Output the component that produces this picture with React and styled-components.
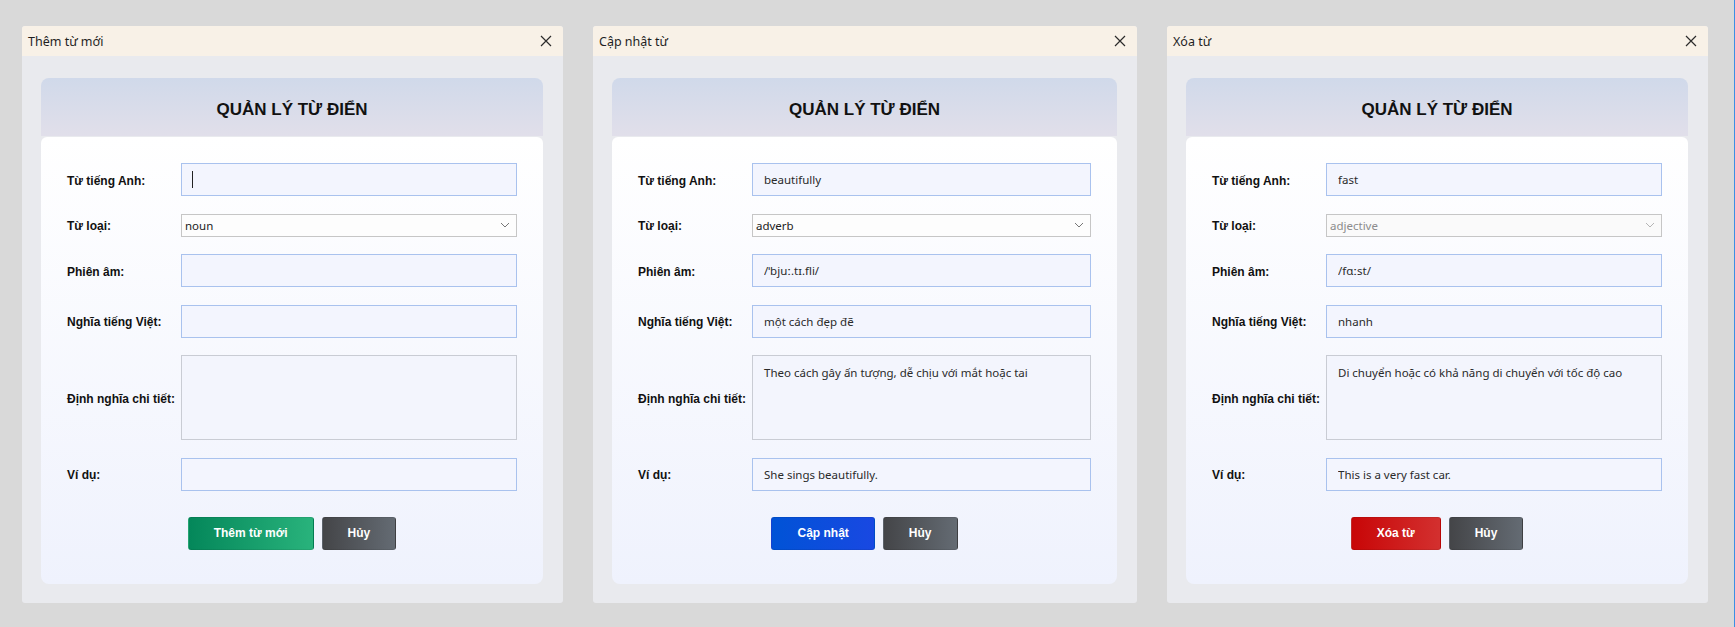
import React from "react";
import styled, { createGlobalStyle } from "styled-components";

const S = {};

const GlobalStyle = createGlobalStyle`
    html, body {
        margin: 0;
        padding: 0;
        background: #d9d9d9;
    }
    * {
        box-sizing: border-box;
    }
`;

const LABEL_FONT = `"Liberation Sans", Arial, sans-serif`;
const UI_FONT = `"Noto Sans", "Open Sans", sans-serif`;

const buttonColors = {
    green: "linear-gradient(90deg, #04875a 0%, #29b37c 100%)",
    blue: "linear-gradient(90deg, #0053d6 0%, #1948e2 100%)",
    red: "linear-gradient(90deg, #c80607 0%, #d3302f 100%)",
    gray: "linear-gradient(90deg, #444548 0%, #646b73 100%)",
};

const dialogs = [
    {
        title: "Thêm từ mới",
        width: 541,
        action: "Thêm từ mới",
        color: "green",
        focused: true,
        values: { word: "", type: "noun", phonetic: "", meaning: "", definition: "", example: "" },
    },
    {
        title: "Cập nhật từ",
        width: 544,
        action: "Cập nhật",
        color: "blue",
        values: {
            word: "beautifully",
            type: "adverb",
            phonetic: "/ˈbjuː.tɪ.fli/",
            meaning: "một cách đẹp đẽ",
            definition: "Theo cách gây ấn tượng, dễ chịu với mắt hoặc tai",
            example: "She sings beautifully.",
        },
    },
    {
        title: "Xóa từ",
        width: 541,
        action: "Xóa từ",
        color: "red",
        lockType: true,
        values: {
            word: "fast",
            type: "adjective",
            phonetic: "/fɑːst/",
            meaning: "nhanh",
            definition: "Di chuyển hoặc có khả năng di chuyển với tốc độ cao",
            example: "This is a very fast car.",
        },
    },
];

const CloseIcon = () => (
    <svg width="12" height="12" viewBox="0 0 12 12">
        <path d="M1 1 L11 11 M11 1 L1 11" stroke="#2b2b2b" strokeWidth="1.2" />
    </svg>
);

const Chevron = ({ light }) => (
    <svg width="10" height="6" viewBox="0 0 10 6">
        <path d="M1 1 L5 5 L9 1" fill="none" stroke={light ? "#b5b5b5" : "#777"} strokeWidth="1" />
    </svg>
);

const Dialog = ({ title, width, action, color, values, focused, lockType }) => (
    <S.Window $width={width}>
        <S.TitleBar>
            <span>{title}</span>
            <CloseIcon />
        </S.TitleBar>
        <S.Content>
            <S.Header>QUẢN LÝ TỪ ĐIỂN</S.Header>
            <S.Card>
                <S.Form>
                    <S.Label>Từ tiếng Anh:</S.Label>
                    <S.Field>
                        <S.Input readOnly value={values.word} />
                        {focused && <S.Caret />}
                    </S.Field>

                    <S.Label>Từ loại:</S.Label>
                    <S.Field>
                        <S.Select value={values.type} disabled={lockType} onChange={() => {}}>
                            <option value="noun">noun</option>
                            <option value="verb">verb</option>
                            <option value="adjective">adjective</option>
                            <option value="adverb">adverb</option>
                        </S.Select>
                        <S.Arrow>
                            <Chevron light={lockType} />
                        </S.Arrow>
                    </S.Field>

                    <S.Label>Phiên âm:</S.Label>
                    <S.Input readOnly value={values.phonetic} />

                    <S.Label>Nghĩa tiếng Việt:</S.Label>
                    <S.Input readOnly value={values.meaning} />

                    <S.Label>Định nghĩa chi tiết:</S.Label>
                    <S.TextArea readOnly value={values.definition} />

                    <S.Label>Ví dụ:</S.Label>
                    <S.Input readOnly value={values.example} />
                </S.Form>
                <S.Actions>
                    <S.Button $color={color}>{action}</S.Button>
                    <S.Button $color="gray">Hủy</S.Button>
                </S.Actions>
            </S.Card>
        </S.Content>
    </S.Window>
);

const App = () => (
    <>
        <GlobalStyle />
        <S.Page>
            {dialogs.map((d) => (
                <Dialog key={d.title} {...d} />
            ))}
        </S.Page>
    </>
);

S.Page = styled.div`
    display: flex;
    align-items: flex-start;
    gap: 30px;
    width: 1735px;
    min-height: 100vh;
    padding: 26px 0 0 22px;
    border-right: 1px solid #3b8fe4;
`;

S.Window = styled.div`
    width: ${(p) => p.$width}px;
    flex-shrink: 0;
    background: #e9eaee;
    border-radius: 3px;
    overflow: hidden;
`;

S.TitleBar = styled.div`
    display: flex;
    align-items: center;
    justify-content: space-between;
    height: 30px;
    padding: 0 11px 0 6px;
    background: #f8f1e7;
    font-family: ${UI_FONT};
    font-size: 12.5px;
    color: #1f1f1f;
`;

S.Content = styled.div`
    padding: 22px 20px 19px 19px;
`;

S.Header = styled.div`
    display: flex;
    align-items: center;
    justify-content: center;
    height: 58px;
    padding-top: 6px;
    border-radius: 8px 8px 0 0;
    background: linear-gradient(180deg, #d0d9ea 0%, #e1dfea 100%);
    font-family: ${LABEL_FONT};
    font-weight: bold;
    font-size: 17px;
    color: #111;
`;

S.Card = styled.div`
    margin-top: 1px;
    padding: 26px 26px 34px 26px;
    border-radius: 6px 6px 8px 8px;
    background: linear-gradient(180deg, #ffffff 0%, #eff2fd 100%);
`;

S.Form = styled.div`
    display: grid;
    grid-template-columns: 114px 1fr;
    row-gap: 17.5px;
    align-items: center;
`;

S.Label = styled.label`
    padding-top: 2px;
    font-family: ${LABEL_FONT};
    font-weight: bold;
    font-size: 12px;
    color: #111;
    white-space: nowrap;
`;

S.Field = styled.div`
    position: relative;
`;

S.Input = styled.input`
    display: block;
    width: 100%;
    height: 33px;
    padding: 0 11px;
    border: 1px solid #a9c2ee;
    background: #f3f5fe;
    font-family: ${UI_FONT};
    font-size: 11.5px;
    color: #2a2a2a;
    outline: none;
`;

S.Caret = styled.span`
    position: absolute;
    left: 11px;
    top: 8px;
    width: 1px;
    height: 17px;
    background: #222;
`;

S.Select = styled.select`
    display: block;
    width: 100%;
    height: 23px;
    padding: 0 3px;
    border: 1px solid #c6c6c6;
    border-radius: 0;
    background: #fdfdfd;
    appearance: none;
    font-family: ${UI_FONT};
    font-size: 11.5px;
    color: #222;
    outline: none;

    &:disabled {
        color: #8c8c8c;
        background: #fafafa;
        opacity: 1;
    }
`;

S.Arrow = styled.span`
    position: absolute;
    right: 7px;
    top: 8px;
    display: flex;
    pointer-events: none;
`;

S.TextArea = styled.textarea`
    display: block;
    width: 100%;
    height: 85px;
    padding: 9px 11px;
    border: 1px solid #c9ccd4;
    background: #f3f5fd;
    resize: none;
    font-family: ${UI_FONT};
    font-size: 11.5px;
    color: #2a2a2a;
    outline: none;
`;

S.Actions = styled.div`
    display: flex;
    justify-content: center;
    gap: 8px;
    margin-top: 26px;
`;

S.Button = styled.button`
    height: 33px;
    padding: 0 25px;
    border: 1px solid rgba(0, 0, 0, 0.08);
    border-radius: 3px;
    background: ${(p) => buttonColors[p.$color]};
    font-family: ${LABEL_FONT};
    font-weight: bold;
    font-size: 12px;
    color: #fff;
    cursor: pointer;
`;

export default App;
